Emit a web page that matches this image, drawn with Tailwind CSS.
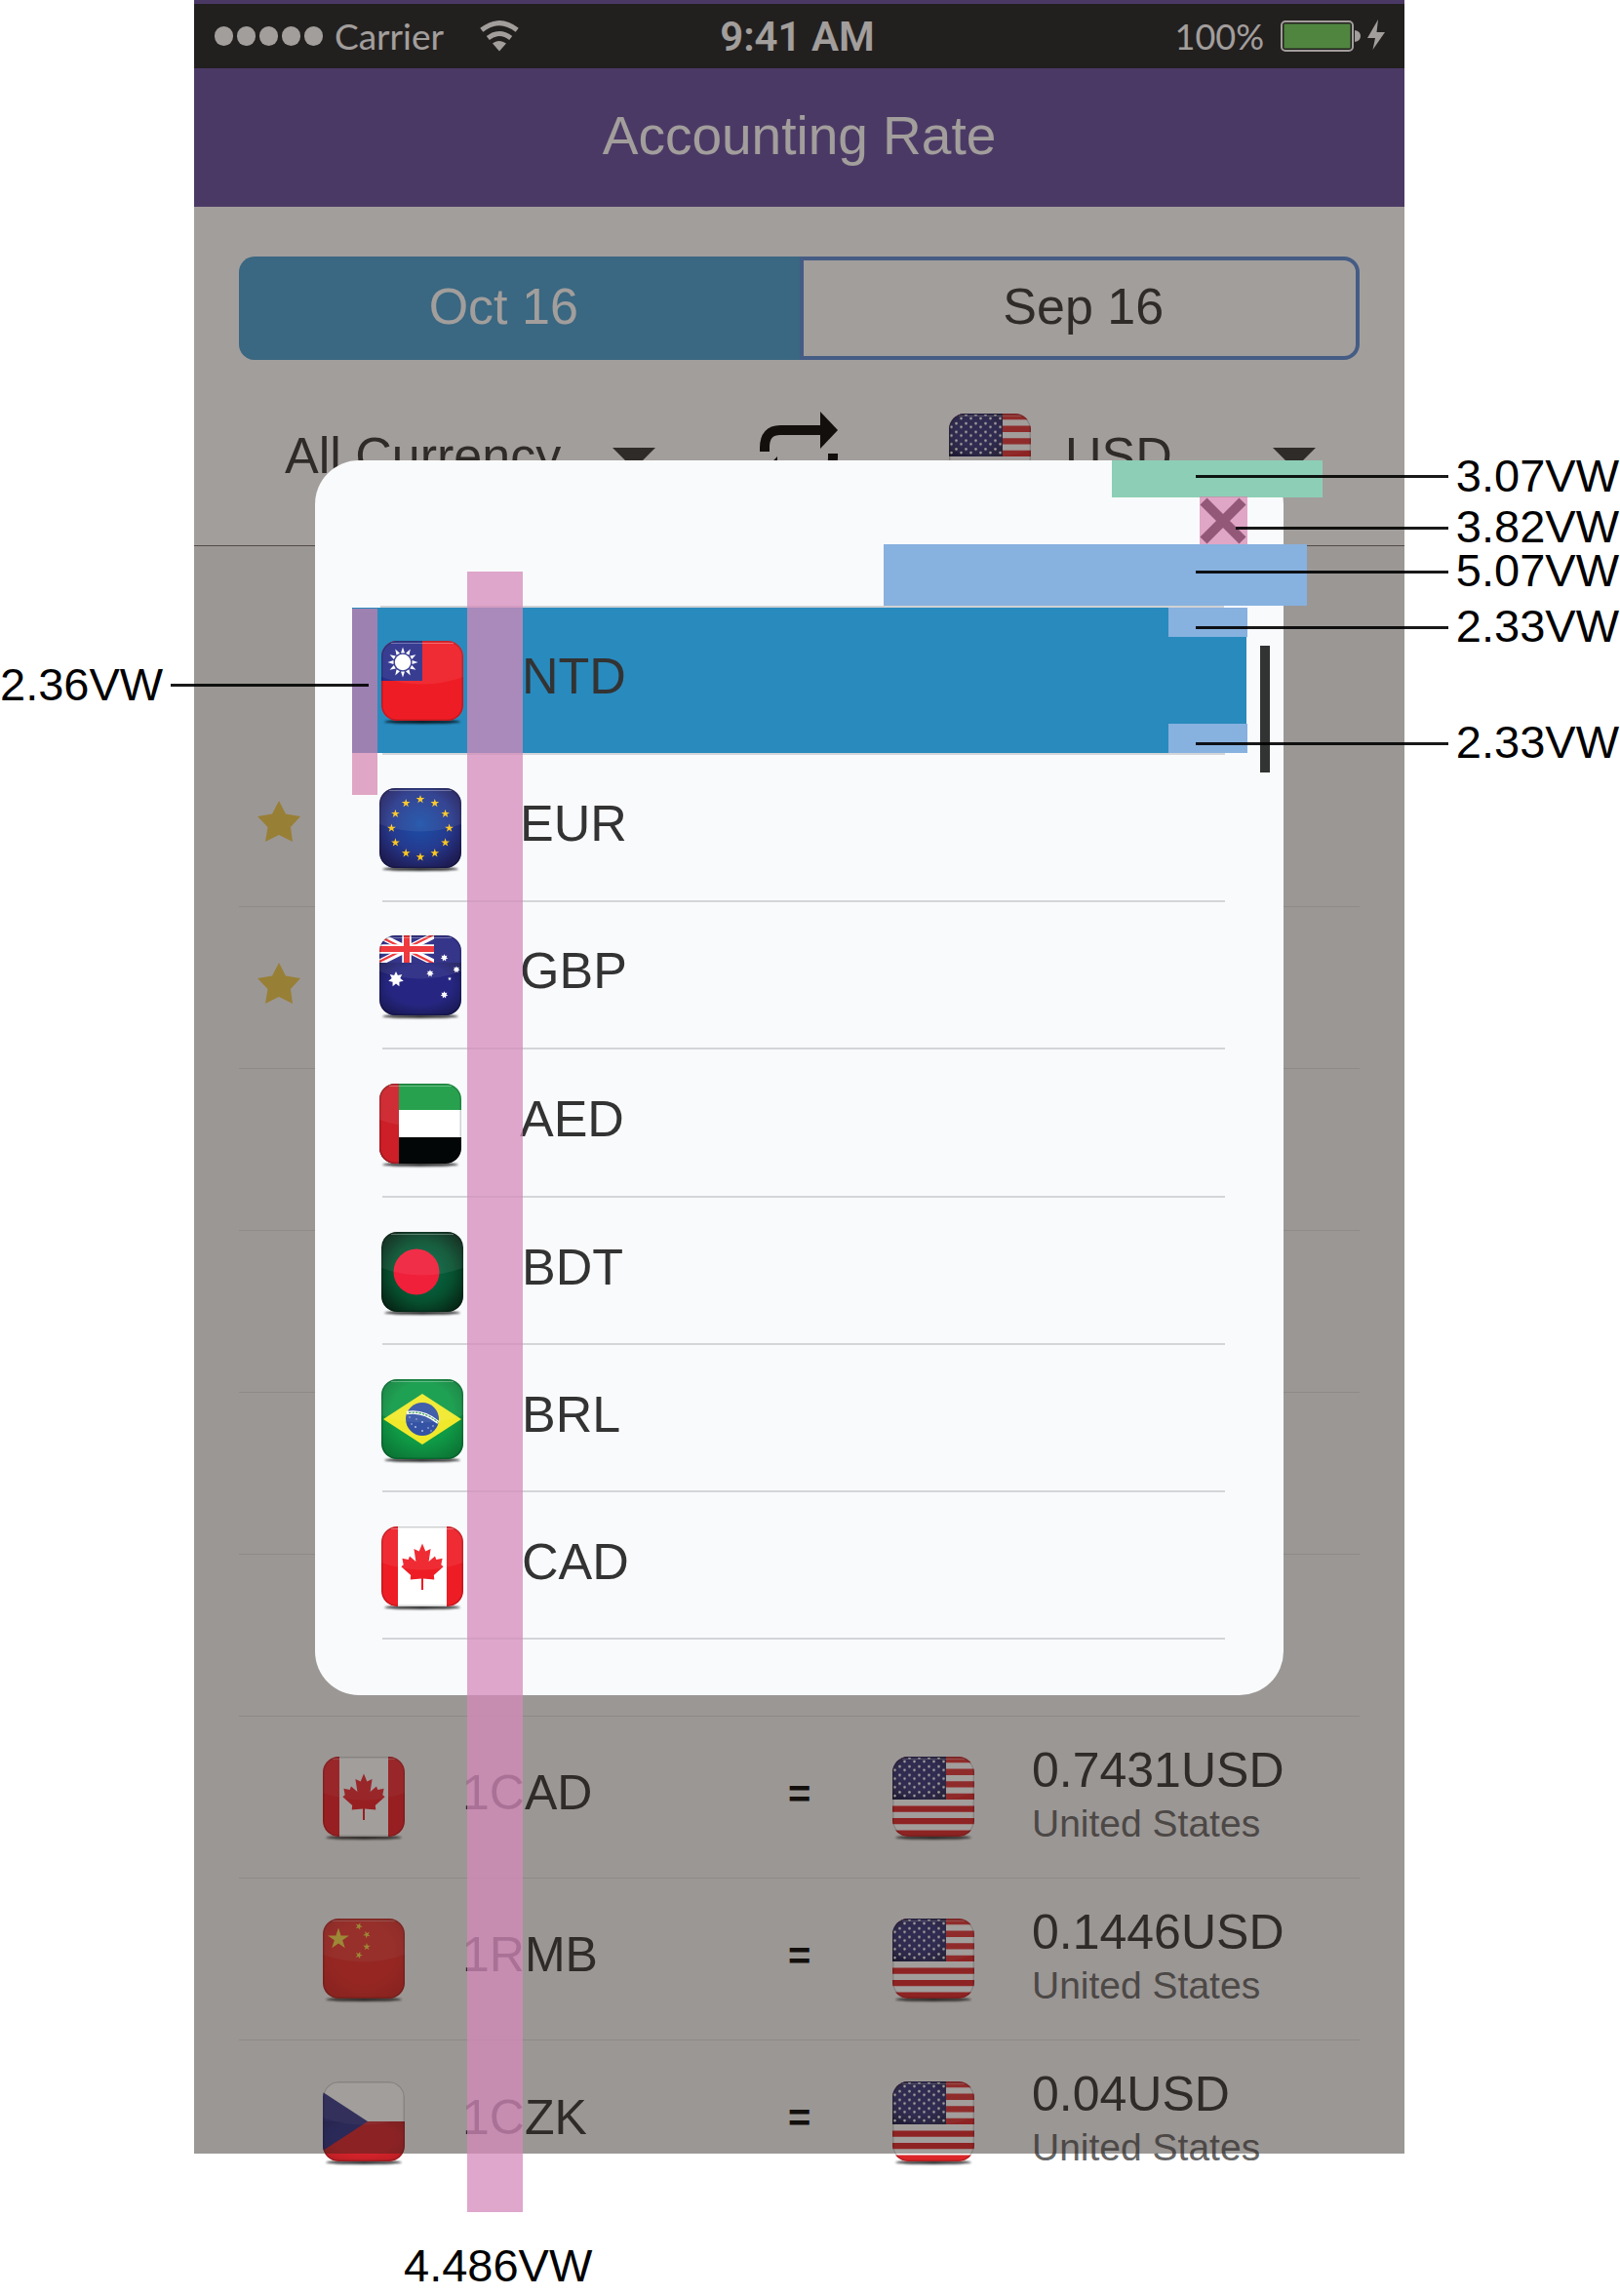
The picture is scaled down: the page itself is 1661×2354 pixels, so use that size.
<!DOCTYPE html>
<html lang="en">
<head>
<meta charset="utf-8">
<title>Accounting Rate</title>
<script src="https://cdn.jsdelivr.net/npm/@tailwindcss/browser@4"></script>
</head>
<body class="bg-white">

<!-- Shared flag artwork -->
<svg width="0" height="0" class="absolute" aria-hidden="true">
  <defs>
    <clipPath id="tile"><rect width="84" height="82" rx="16"/></clipPath>
    <filter id="soft" x="-20%" y="-100%" width="140%" height="300%"><feGaussianBlur stdDeviation="1"/></filter>
    <radialGradient id="vignette" cx=".5" cy=".42" r=".75"><stop offset=".5" stop-color="#000" stop-opacity="0"/><stop offset="1" stop-color="#000" stop-opacity=".45"/></radialGradient>
    <radialGradient id="euBlue" cx=".5" cy=".45" r=".6"><stop offset="0" stop-color="#1b50a8"/><stop offset="1" stop-color="#2b2a7c"/></radialGradient>
    <radialGradient id="bdGreen" cx=".5" cy=".5" r=".75"><stop offset="0" stop-color="#07714d"/><stop offset=".5" stop-color="#06502f"/><stop offset="1" stop-color="#060c06"/></radialGradient>
    <polygon id="star5" points="0,-1 .225,-.309 .951,-.309 .363,.118 .588,.809 0,.382 -.588,.809 -.363,.118 -.951,-.309 -.225,-.309"/>
    <polygon id="star7" points="0,-1 .24,-.5 .78,-.62 .54,-.12 .97,.22 .43,.35 .43,.9 0,.55 -.43,.9 -.43,.35 -.97,.22 -.54,-.12 -.78,-.62 -.24,-.5"/>
    <pattern id="usStars" width="10" height="8.8" patternUnits="userSpaceOnUse"><circle cx="2.5" cy="5" r="1.3" fill="#fff"/><circle cx="7.5" cy="1.300" r="1.3" fill="#fff"/></pattern>
    <g id="gloss">
      <path d="M0 0H84V37Q42 52 0 37Z" fill="#fff" opacity=".07"/>
      <rect x=".75" y=".75" width="82.500" height="80.500" rx="15.500" fill="none" stroke="#000" stroke-opacity=".18" stroke-width="1.500"/>
      <path d="M10 2.500H74" stroke="#fff" stroke-opacity=".3" stroke-width="1.200"/>
    </g>
    <ellipse id="shade" cx="42" cy="83" rx="39" ry="2" fill="#000" opacity=".8" filter="url(#soft)"/>

    <symbol id="flag-tw" viewBox="0 0 84 87">
      <use href="#shade"/>
      <g clip-path="url(#tile)">
        <rect width="84" height="82" fill="#ee1d25"/><rect width="42" height="41" fill="#2a2f8a"/>
        <g transform="translate(22 22)" fill="#fff">
          <g id="rays"><path d="M-2 -9.500L0 -15.500L2 -9.500ZM-2 9.500L0 15.500L2 9.500ZM-9.500 -2L-15.500 0L-9.500 2ZM9.500 -2L15.500 0L9.500 2Z"/></g>
          <use href="#rays" transform="rotate(30)"/><use href="#rays" transform="rotate(60)"/>
          <circle r="8.200"/>
        </g>
        <use href="#gloss"/>
      </g>
    </symbol>

    <symbol id="flag-eu" viewBox="0 0 84 87">
      <use href="#shade"/>
      <g clip-path="url(#tile)">
        <rect width="84" height="82" fill="url(#euBlue)"/><rect width="84" height="82" fill="url(#vignette)"/>
        <g fill="#fdc81e">
          <use href="#star5" transform="translate(42 11.500) scale(4.600)"/><use href="#star5" transform="translate(56.800 15.500) scale(4.600)"/>
          <use href="#star5" transform="translate(67.600 26.300) scale(4.600)"/><use href="#star5" transform="translate(71.600 41.100) scale(4.600)"/>
          <use href="#star5" transform="translate(67.600 55.900) scale(4.600)"/><use href="#star5" transform="translate(56.800 66.700) scale(4.600)"/>
          <use href="#star5" transform="translate(42 70.700) scale(4.600)"/><use href="#star5" transform="translate(27.200 66.700) scale(4.600)"/>
          <use href="#star5" transform="translate(16.400 55.900) scale(4.600)"/><use href="#star5" transform="translate(12.400 41.100) scale(4.600)"/>
          <use href="#star5" transform="translate(16.400 26.300) scale(4.600)"/><use href="#star5" transform="translate(27.200 15.500) scale(4.600)"/>
        </g>
        <use href="#gloss"/>
      </g>
    </symbol>

    <symbol id="flag-au" viewBox="0 0 84 87">
      <use href="#shade"/>
      <g clip-path="url(#tile)">
        <rect width="84" height="82" fill="#262682"/>
        <path d="M0 0L56 28M56 0L0 28" stroke="#fff" stroke-width="6.500"/>
        <path d="M0 1L56 29M56 -1L0 27" stroke="#ee2a30" stroke-width="2.200"/>
        <path d="M28 0V28M0 14H56" stroke="#fff" stroke-width="9.500"/>
        <path d="M28 0V28M0 14H56" stroke="#ee2a30" stroke-width="6"/>
        <path d="M0 28H56V34H0Z" fill="#262682"/><path d="M56 -2H62V30H56Z" fill="#262682"/>
        <rect y="28" width="84" height="54" fill="url(#vignette)"/>
        <g fill="#fff">
          <use href="#star7" transform="translate(17 45) scale(8)"/><use href="#star7" transform="translate(52 39) scale(3.800)"/>
          <use href="#star7" transform="translate(66.500 23) scale(3.800)"/><use href="#star7" transform="translate(79 35) scale(3.600)"/>
          <use href="#star7" transform="translate(66.500 61) scale(3.800)"/><use href="#star5" transform="translate(72 44.500) scale(2.200)"/>
        </g>
        <use href="#gloss"/>
      </g>
    </symbol>

    <symbol id="flag-ae" viewBox="0 0 84 87">
      <use href="#shade"/>
      <g clip-path="url(#tile)">
        <rect width="84" height="82" fill="#fff"/><rect width="84" height="27" fill="#189a42"/><rect y="55" width="84" height="27" fill="#020607"/><rect width="20" height="82" fill="#cc1f27"/>
        <use href="#gloss"/>
      </g>
    </symbol>

    <symbol id="flag-bd" viewBox="0 0 84 87">
      <use href="#shade"/>
      <g clip-path="url(#tile)">
        <rect width="84" height="82" fill="url(#bdGreen)"/><circle cx="36" cy="41" r="23.500" fill="#f01f3a"/>
        <use href="#gloss"/>
      </g>
    </symbol>

    <symbol id="flag-br" viewBox="0 0 84 87">
      <use href="#shade"/>
      <g clip-path="url(#tile)">
        <rect width="84" height="82" fill="#0f9a46"/><rect width="84" height="82" fill="url(#vignette)" opacity=".7"/>
        <path d="M2 41L42 15L82 41L42 67Z" fill="#f0e92b"/>
        <circle cx="42" cy="41" r="17" fill="#3453a5"/>
        <path d="M26 34.500Q43 31.500 58.500 44.500" fill="none" stroke="#fff" stroke-width="3.400"/>
        <path d="M28 34.500Q43 32 58 44" fill="none" stroke="#3f9a5c" stroke-width="1.300" stroke-dasharray="2.500 1"/>
        <g fill="#fff" opacity=".7"><circle cx="29" cy="39" r=".8"/><circle cx="36" cy="41" r=".7"/><circle cx="42" cy="44" r="1"/><circle cx="31" cy="46" r=".8"/><circle cx="35" cy="49" r=".9"/><circle cx="42" cy="53" r=".9"/><circle cx="48" cy="50" r=".8"/><circle cx="53" cy="48" r=".8"/><circle cx="51" cy="53" r=".7"/></g>
        <use href="#gloss"/>
      </g>
    </symbol>

    <symbol id="flag-ca" viewBox="0 0 84 87">
      <use href="#shade"/>
      <g clip-path="url(#tile)">
        <rect width="84" height="82" fill="#fff"/><rect width="17" height="82" fill="#ee1d25"/><rect x="67" width="17" height="82" fill="#ee1d25"/>
        <path fill="#ee1d25" d="M42 17.600L45.300 25.500L50.600 23L48.600 36L55 30.600L56.300 34L62.600 32.700L61.300 39.300L63.600 41.300L53.800 50L54.300 54.400L43 53.400V65H41V53.400L29.700 54.400L30.200 50L20.400 41.300L22.700 39.300L21.400 32.700L27.700 34L29 30.600L35.400 36L33.400 23L38.700 25.500Z"/>
        <use href="#gloss"/>
      </g>
    </symbol>

    <symbol id="flag-cn" viewBox="0 0 84 87">
      <use href="#shade"/>
      <g clip-path="url(#tile)">
        <rect width="84" height="82" fill="#ea2a26"/><rect width="84" height="82" fill="url(#vignette)" opacity=".3"/>
        <g fill="#f5d53c">
          <use href="#star5" transform="translate(16 21) scale(11.500)"/><use href="#star5" transform="translate(37 8) rotate(20) scale(4)"/>
          <use href="#star5" transform="translate(45 16.500) rotate(45) scale(4)"/><use href="#star5" transform="translate(45 29) scale(4)"/>
          <use href="#star5" transform="translate(37 37.500) rotate(20) scale(4)"/>
        </g>
        <use href="#gloss"/>
      </g>
    </symbol>

    <symbol id="flag-cz" viewBox="0 0 84 87">
      <use href="#shade"/>
      <g clip-path="url(#tile)">
        <rect width="84" height="82" fill="#fff"/><rect y="41" width="84" height="41" fill="#d8232a"/><path d="M0 11L46 41L0 71Z" fill="#2b2f86"/>
        <rect y="41" width="84" height="41" fill="url(#vignette)" opacity=".4"/>
        <use href="#gloss"/>
      </g>
    </symbol>

    <symbol id="flag-us" viewBox="0 0 84 87">
      <use href="#shade"/>
      <g clip-path="url(#tile)">
        <rect width="84" height="82" fill="#fff"/>
        <path d="M0 3.150H84M0 15.750H84M0 28.350H84M0 40.950H84M0 53.550H84M0 66.150H84M0 78.750H84" stroke="#dc2528" stroke-width="6.300"/>
        <rect width="55" height="44" fill="#25236e"/><rect width="55" height="44" fill="url(#vignette)"/><rect x="0" y="1" width="55" height="42" fill="url(#usStars)"/>
        <use href="#gloss"/>
      </g>
    </symbol>
  </defs>
</svg>

<div class="relative min-h-[2354px] pl-[199px] pr-[221px] font-['Liberation_Sans',Arial,sans-serif] text-[#333]">

  <!-- Phone screen -->
  <main class="relative h-[2208px] bg-[#f3f3f3]">
    <div class="grid h-[70px] grid-cols-[1fr_auto_1fr] items-center border-t-4 border-[#654c9e] bg-[#1c1e20] text-white font-[Lato,sans-serif]">
      <div class="flex items-center pl-[21px] text-[37px]">
        <div class="mr-3 flex gap-1">
          <i class="h-5 w-[19px] rounded-full bg-white"></i><i class="h-5 w-[19px] rounded-full bg-white"></i><i class="h-5 w-[19px] rounded-full bg-white"></i><i class="h-5 w-[19px] rounded-full bg-white"></i><i class="h-5 w-[19px] rounded-full bg-white"></i>
        </div>
        <span>Carrier</span>
        <svg class="ml-[37px] h-[32px] w-[40px]" viewBox="0 0 40 32" fill="none" stroke="#fff" stroke-width="5"><path d="M1.800 9.800Q20 -4.500 38.200 9.800"/><path d="M8.300 18Q20 9 31.700 18"/><path d="M20 31.500L13 23.500Q20 18.500 27 23.500Z" fill="#fff" stroke="none"/></svg>
      </div>
      <span class="pr-1 font-[Roboto,sans-serif] text-[42px] font-semibold">9:41 AM</span>
      <div class="flex items-center justify-end pr-[19px] text-[36px]">
        <span>100%</span>
        <svg class="ml-[17px] h-[34px] w-[108px]" viewBox="0 0 108 34"><rect x="1" y="2" width="73" height="30" rx="4" fill="none" stroke="#fff" stroke-width="2"/><rect x="3.500" y="4.500" width="68" height="25" rx="1" fill="#6ed359"/><path d="M76 11Q82 12 82 17Q82 22 76 23Z" fill="#fff"/><path d="M100 0L89 19H97L94.500 31L107 13H98.500Z" fill="#fff"/></svg>
      </div>
    </div>

    <header class="flex h-[142px] items-center justify-center bg-[#654c9e] pb-1 text-white">
      <h1 class="text-[55px] leading-none">Accounting Rate</h1>
    </header>

    <section class="h-[348px] border-b border-[#74696a] bg-white pt-[51px]">
      <div class="mx-[46px] grid h-[106px] grid-cols-2">
        <button class="rounded-l-2xl bg-[#479ecf] pb-1 pr-8 text-[52px] text-white">Oct 16</button>
        <button class="rounded-r-2xl border-4 border-[#598ad5] pb-1 pl-2 text-[52px]">Sep 16</button>
      </div>
      <div class="flex h-[190px] items-center pl-[93px] text-[52px]">
        <div class="mr-[107px] flex items-center pt-1.5">
          <select aria-label="Source currency" class="w-[336px] appearance-none"><option>All Currency</option></select>
          <svg class="h-7 w-11" viewBox="0 0 44 28"><path d="M0 6H44L22 28Z" fill="#333"/></svg>
        </div>
        <button aria-label="Swap currencies" class="mr-[114px]">
          <svg class="h-[86px] w-[80px]" viewBox="0 0 80 86"><g id="half"><path d="M5 42V38Q5 20 21 20H64" fill="none" stroke="#000" stroke-width="10"/><path d="M62 1L80 20L62 39Z"/></g><use href="#half" transform="rotate(180 40 43)"/></svg>
        </button>
        <div class="flex items-center pt-1.5">
          <svg class="h-[87px] w-[84px]"><use href="#flag-us"/></svg>
          <select aria-label="Target currency" class="ml-[35px] w-[213px] appearance-none"><option>USD</option></select>
          <svg class="h-7 w-11" viewBox="0 0 44 28"><path d="M0 6H44L22 28Z" fill="#333"/></svg>
        </div>
      </div>
    </section>

    <ul class="mx-[46px] pt-[204px]">
      <li class="flex h-[166px] items-center border-b border-[#dcdcdc] pb-2.5 pl-[19px]"><svg class="h-[42px] w-[44px]" viewBox="0 0 44 42"><path d="M22 0L29 13.500L44 16L34 27L36 42L22 35L8 42L10.500 27L0 16L15 13.500Z" fill="#eec849"/></svg></li>
      <li class="flex h-[166px] items-center border-b border-[#dcdcdc] pb-2.5 pl-[19px]"><svg class="h-[42px] w-[44px]" viewBox="0 0 44 42"><path d="M22 0L29 13.500L44 16L34 27L36 42L22 35L8 42L10.500 27L0 16L15 13.500Z" fill="#eec849"/></svg></li>
      <li class="h-[166px] border-b border-[#dcdcdc]"></li>
      <li class="h-[166px] border-b border-[#dcdcdc]"></li>
      <li class="h-[166px] border-b border-[#dcdcdc]"></li>
      <li class="h-[166px] border-b border-[#dcdcdc]"></li>
      <li class="grid h-[166px] grid-cols-[86px_143px_334px_107px_143px_1fr] items-center border-b border-[#dcdcdc]">
        <svg class="col-start-2 mt-1 h-[87px] w-[84px]"><use href="#flag-ca"/></svg>
        <span class="pb-2 text-[50px]">1CAD</span>
        <span class="pb-2 text-[40px] font-bold text-black">=</span>
        <svg class="mt-1 h-[87px] w-[84px]"><use href="#flag-us"/></svg>
        <div class="pb-0.5"><p class="text-[50px] leading-[56px]">0.7431USD</p><p class="text-[39px] leading-[54px] text-[#666]">United States</p></div>
      </li>
      <li class="grid h-[166px] grid-cols-[86px_143px_334px_107px_143px_1fr] items-center border-b border-[#dcdcdc]">
        <svg class="col-start-2 mt-1 h-[87px] w-[84px]"><use href="#flag-cn"/></svg>
        <span class="pb-2 text-[50px]">1RMB</span>
        <span class="pb-2 text-[40px] font-bold text-black">=</span>
        <svg class="mt-1 h-[87px] w-[84px]"><use href="#flag-us"/></svg>
        <div class="pb-0.5"><p class="text-[50px] leading-[56px]">0.1446USD</p><p class="text-[39px] leading-[54px] text-[#666]">United States</p></div>
      </li>
      <li class="grid h-[166px] grid-cols-[86px_143px_334px_107px_143px_1fr] items-center">
        <svg class="col-start-2 mt-1 h-[87px] w-[84px]"><use href="#flag-cz"/></svg>
        <span class="pb-2 text-[50px]">1CZK</span>
        <span class="pb-2 text-[40px] font-bold text-black">=</span>
        <svg class="mt-1 h-[87px] w-[84px]"><use href="#flag-us"/></svg>
        <div class="pb-0.5"><p class="text-[50px] leading-[56px]">0.04USD</p><p class="text-[39px] leading-[54px] text-[#666]">United States</p></div>
      </li>
    </ul>

    <!-- Backdrop and currency picker -->
    <div class="absolute inset-0 bg-[#2c231e]/44"></div>

    <div role="dialog" aria-label="Choose a currency" class="absolute inset-x-[124px] top-[472px] rounded-[45px] bg-[#f9fafc] px-[38px] pb-[57px]">
      <div class="flex h-[149px] justify-end pt-[38px]">
        <button aria-label="Close" class="h-12 w-12"><svg class="h-12 w-12" viewBox="0 0 48 48"><path d="M4 4L44 44M44 4L4 44" stroke="#0c0c0c" stroke-width="10"/></svg></button>
      </div>
      <div class="ml-[29px] mr-[23px] h-0.5 bg-[#d0d2d4]"></div>
      <ul class="text-[52px]">
        <li><button class="flex h-[149px] w-full items-center gap-[60px] bg-[#298abd] pl-[30px]"><svg class="mt-1.5 h-[87px] w-[84px]"><use href="#flag-tw"/></svg><span class="pb-2.5">NTD</span></button><div class="ml-[31px] mr-[22px] h-0.5 bg-[#d3d5d8]"></div></li>
        <li><button class="flex h-[149px] w-full items-center gap-[60px] pl-[28px]"><svg class="mt-1.5 h-[87px] w-[84px]"><use href="#flag-eu"/></svg><span class="pb-2.5">EUR</span></button><div class="ml-[31px] mr-[22px] h-0.5 bg-[#d3d5d8]"></div></li>
        <li><button class="flex h-[149px] w-full items-center gap-[60px] pl-[28px]"><svg class="mt-1.5 h-[87px] w-[84px]"><use href="#flag-au"/></svg><span class="pb-2.5">GBP</span></button><div class="ml-[31px] mr-[22px] h-0.5 bg-[#d3d5d8]"></div></li>
        <li><button class="flex h-[150px] w-full items-center gap-[60px] pl-[28px]"><svg class="mt-1.5 h-[87px] w-[84px]"><use href="#flag-ae"/></svg><span class="pb-2">AED</span></button><div class="ml-[31px] mr-[22px] h-0.5 bg-[#d3d5d8]"></div></li>
        <li><button class="flex h-[149px] w-full items-center gap-[60px] pl-[30px]"><svg class="mt-2 h-[87px] w-[84px]"><use href="#flag-bd"/></svg><span class="pb-2">BDT</span></button><div class="ml-[31px] mr-[22px] h-0.5 bg-[#d3d5d8]"></div></li>
        <li><button class="flex h-[149px] w-full items-center gap-[60px] pl-[30px]"><svg class="mt-2 h-[87px] w-[84px]"><use href="#flag-br"/></svg><span class="pb-2">BRL</span></button><div class="ml-[31px] mr-[22px] h-0.5 bg-[#d3d5d8]"></div></li>
        <li><button class="flex h-[149px] w-full items-center gap-[60px] pl-[30px]"><svg class="mt-2 h-[87px] w-[84px]"><use href="#flag-ca"/></svg><span class="pb-2">CAD</span></button><div class="ml-[31px] mr-[22px] h-0.5 bg-[#d3d5d8]"></div></li>
      </ul>
      <div class="absolute right-[14px] top-[190px] h-[130px] w-[10px] bg-[#323434]"></div>
    </div>
  </main>

  <!-- Spacing annotations -->
  <div class="absolute right-[305px] top-[472px] h-[38px] w-[216px] bg-[#8dcfb6]"></div>
  <div class="absolute right-[382px] top-[509px] h-[49px] w-[49px] bg-[#d47eab]/68"></div>
  <div class="absolute right-[321px] top-[558px] h-[63px] w-[434px] bg-[#87b1df]"></div>
  <div class="absolute right-[382px] top-[623px] h-[30px] w-[81px] bg-[#87b1df]"></div>
  <div class="absolute right-[382px] top-[742px] h-[30px] w-[81px] bg-[#87b1df]"></div>
  <div class="absolute left-[361px] top-[624px] h-[191px] w-[26px] bg-[#d47eab]/68"></div>
  <div class="absolute left-[479px] top-[586px] h-[1682px] w-[57px] bg-[#d48abb]/75"></div>

  <div class="absolute right-[176px] top-[487px] h-[3px] w-[259px] bg-black/90"></div>
  <div class="absolute right-[176px] top-[540px] h-[3px] w-[218px] bg-black/90"></div>
  <div class="absolute right-[176px] top-[585px] h-[3px] w-[259px] bg-black/90"></div>
  <div class="absolute right-[176px] top-[642px] h-[3px] w-[259px] bg-black/90"></div>
  <div class="absolute right-[176px] top-[761px] h-[3px] w-[259px] bg-black/90"></div>
  <div class="absolute left-[175px] top-[701px] h-[3px] w-[203px] bg-black/90"></div>

  <div class="text-[47px] leading-[44px] text-black">
    <p class="absolute right-px top-[466px]">3.07VW</p>
    <p class="absolute right-px top-[518px]">3.82VW</p>
    <p class="absolute right-px top-[563px]">5.07VW</p>
    <p class="absolute right-px top-[620px]">2.33VW</p>
    <p class="absolute right-px top-[739px]">2.33VW</p>
    <p class="absolute left-0 top-[680px]">2.36VW</p>
    <p class="absolute left-[414px] top-[2301px]">4.486VW</p>
  </div>
</div>
</body>
</html>
